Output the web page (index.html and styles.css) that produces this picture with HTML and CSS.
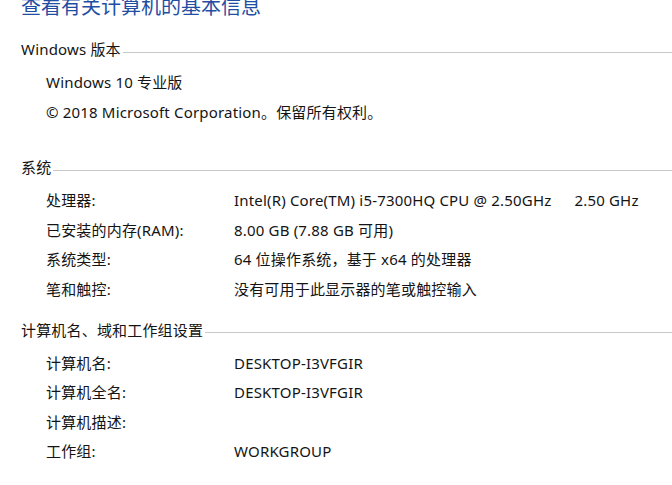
FILE: index.html
```html
<!DOCTYPE html>
<html lang="zh-CN">
<head>
<meta charset="utf-8">
<title>系统</title>
<link rel="stylesheet" href="styles.css">
</head>
<body>
<main class="page">
  <h1 class="title">查看有关计算机的基本信息</h1>

  <section class="group group-windows">
    <div class="group-head"><span class="group-name">Windows 版本</span><span class="rule"></span></div>
    <div class="rows">
      <div class="full">Windows 10 专业版</div>
      <div class="full">© 2018 Microsoft Corporation。保留所有权利。</div>
    </div>
  </section>

  <section class="group group-system">
    <div class="group-head"><span class="group-name">系统</span><span class="rule"></span></div>
    <div class="rows">
      <div class="label">处理器:</div><div class="value">Intel(R) Core(TM) i5-7300HQ CPU @ 2.50GHz<span class="gap"></span>2.50 GHz</div>
      <div class="label">已安装的内存(RAM):</div><div class="value">8.00 GB (7.88 GB 可用)</div>
      <div class="label">系统类型:</div><div class="value">64 位操作系统，基于 x64 的处理器</div>
      <div class="label">笔和触控:</div><div class="value">没有可用于此显示器的笔或触控输入</div>
    </div>
  </section>

  <section class="group group-name-sec">
    <div class="group-head"><span class="group-name">计算机名、域和工作组设置</span><span class="rule"></span></div>
    <div class="rows">
      <div class="label">计算机名:</div><div class="value">DESKTOP-I3VFGIR</div>
      <div class="label">计算机全名:</div><div class="value">DESKTOP-I3VFGIR</div>
      <div class="label">计算机描述:</div><div class="value"></div>
      <div class="label">工作组:</div><div class="value">WORKGROUP</div>
    </div>
  </section>
</main>
</body>
</html>
```

FILE: styles.css
```css
html, body {
  margin: 0;
  padding: 0;
  background: #ffffff;
}

body {
  width: 672px;
  height: 485px;
  overflow: hidden;
  font-family: "Noto Sans", "Noto Sans CJK SC", sans-serif;
  font-size: 15px;
  letter-spacing: 0.18px;
  color: #141414;
}

.page {
  padding-left: 21px;
}

.title {
  margin: -5px 0 0 0;
  font-family: "Noto Sans", "Noto Sans CJK SC", sans-serif;
  font-size: 20px;
  font-weight: normal;
  line-height: 24px;
  letter-spacing: 0;
  color: #1f4ea3;
}

.group-head {
  display: flex;
  align-items: center;
  height: 20px;
  line-height: 20px;
  font-size: 15px;
}

.group-name {
  white-space: nowrap;
}

.rule {
  flex: 1;
  height: 1px;
  margin-left: 2px;
  margin-top: 6px;
  background: #c8c8c8;
}

.group-windows {
  margin-top: 20px;
}

.group-system {
  margin-top: 30px;
}

.group-name-sec {
  margin-top: 15.5px;
}

.rows {
  display: grid;
  grid-template-columns: 188px 1fr;
  grid-auto-rows: 29.5px;
  align-items: center;
  margin-top: 9px;
  padding-left: 25px;
  line-height: 29.5px;
  white-space: nowrap;
}

.full {
  grid-column: 1 / -1;
}

.gap {
  display: inline-block;
  width: 23px;
}
```
